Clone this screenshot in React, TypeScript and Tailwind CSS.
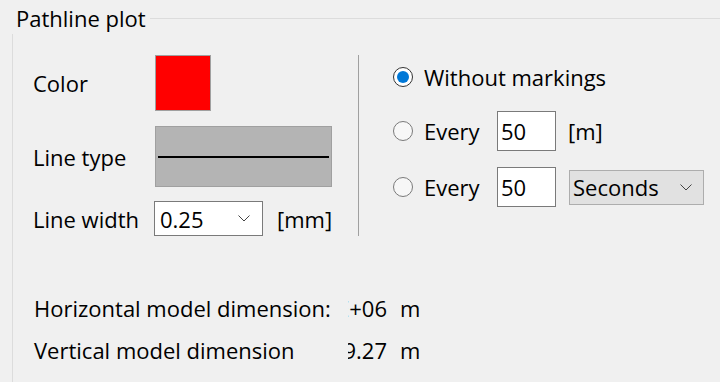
import React from "react";

function Chevron({ className = "" }: { className?: string }) {
  return (
    <svg className={className} width="12" height="7" viewBox="0 0 12 7" fill="none">
      <polyline points="0.5,0.5 6,6 11.5,0.5" stroke="#444" strokeWidth="1" />
    </svg>
  );
}

function Radio({ checked }: { checked?: boolean }) {
  return checked ? (
    <span className="flex h-[20px] w-[20px] items-center justify-center rounded-full border border-[#333333] bg-white">
      <span className="h-[12px] w-[12px] rounded-full bg-[#0078d7]" />
    </span>
  ) : (
    <span className="h-[20px] w-[20px] rounded-full border border-[#7a7a7a] bg-[#f7f7f7]" />
  );
}

export default function App() {
  return (
    <div
      className="relative h-[382px] w-[720px] overflow-hidden bg-[#f0f0f0] text-[22px] leading-none text-black"
      style={{ fontFamily: '"Open Sans", "Noto Sans", sans-serif' }}
    >
      <div className="relative ml-[12px] mt-[18px] h-[400px] border-l border-t border-[#dcdcdc]">
        <div className="absolute left-[-13px] top-[-19px] flex h-[34px] w-[150px] items-start whitespace-nowrap bg-[#f0f0f0] pl-[16px] pt-[6px]">
          <span className="leading-[24px]">Pathline plot</span>
        </div>

        <div className="flex pl-[20px] pt-[36px]">
          {/* left column */}
          <div className="flex w-[325px] flex-col">
            <div className="flex h-[56px] items-center">
              <span className="w-[122px]">Color</span>
              <div className="h-[56px] w-[56px] border border-[#a0a0a0] bg-[#ff0000]" />
            </div>
            <div className="mt-[15px] flex h-[61px] items-center">
              <span className="w-[122px]">Line type</span>
              <div className="flex h-[61px] w-[177px] items-center border border-[#a0a0a0] bg-[#b4b4b4] px-[2px]">
                <div className="h-[2px] w-full bg-black" />
              </div>
            </div>
            <div className="mt-[14px] flex h-[35px] items-center">
              <span className="w-[121px]">Line width</span>
              <div className="flex h-[35px] w-[109px] items-center justify-between border border-[#7a7a7a] bg-white pl-[5px] pr-[12px]">
                <span>0.25</span>
                <Chevron />
              </div>
              <span className="ml-[14px]">[mm]</span>
            </div>
          </div>

          {/* right column */}
          <div className="flex h-[181px] flex-col border-l border-[#a0a0a0] pl-[34px]">
            <div className="flex h-[44px] items-center">
              <Radio checked />
              <span className="ml-[11px]">Without markings</span>
            </div>
            <div className="mt-[12px] flex h-[40px] items-center">
              <Radio />
              <span className="ml-[11px] w-[73px]">Every</span>
              <div className="flex h-[40px] w-[59px] items-center border border-[#7a7a7a] bg-white pl-[3px]">
                50
              </div>
              <span className="ml-[12px]">[m]</span>
            </div>
            <div className="mt-[16px] flex h-[40px] items-center">
              <Radio />
              <span className="ml-[11px] w-[73px]">Every</span>
              <div className="flex h-[40px] w-[59px] items-center border border-[#7a7a7a] bg-white pl-[3px]">
                50
              </div>
              <div className="ml-[13px] flex h-[35px] w-[135px] items-center justify-between border border-[#adadad] bg-[#e1e1e1] pl-[3px] pr-[11px]">
                <span>Seconds</span>
                <Chevron />
              </div>
            </div>
          </div>
        </div>

        <div className="mt-[57px] flex flex-col pl-[21px]">
          <div className="flex h-[30px] items-center">
            <span className="w-[314px] whitespace-nowrap">Horizontal model dimension:</span>
            <span className="w-[39px] overflow-hidden whitespace-nowrap text-right" dir="rtl">
              <span dir="ltr">1.23456E+06</span>
            </span>
            <span className="ml-[13px]">m</span>
          </div>
          <div className="mt-[12px] flex h-[30px] items-center">
            <span className="w-[314px] whitespace-nowrap">Vertical model dimension</span>
            <span className="w-[39px] overflow-hidden whitespace-nowrap text-right" dir="rtl">
              <span dir="ltr">5489.27</span>
            </span>
            <span className="ml-[13px]">m</span>
          </div>
        </div>
      </div>
    </div>
  );
}
